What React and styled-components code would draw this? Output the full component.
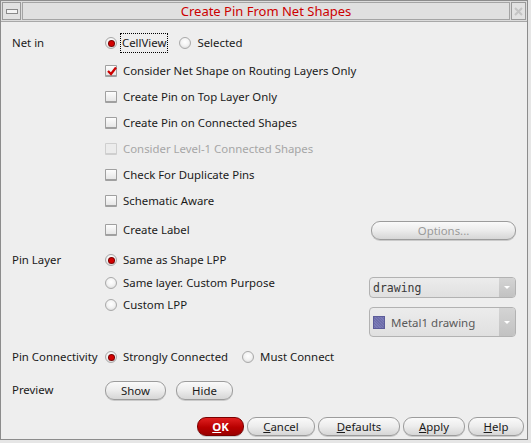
import React from "react";
import styled, { createGlobalStyle } from "styled-components";

const Global = createGlobalStyle`
  html, body {
    margin: 0;
    padding: 0;
    background: #e6e6e6;
  }
  body {
    font-family: "Noto Sans", "DejaVu Sans", sans-serif;
    font-size: 11.4px;
    color: #1a1a1a;
  }
`;

const Window = styled.div`
  width: 528px;
  height: 440px;
  box-sizing: border-box;
  border: 1px solid #8c8c8c;
  background: #eeeeee;
  display: flex;
  flex-direction: column;
`;

const TitleBar = styled.div`
  height: 20px;
  display: flex;
  align-items: stretch;
  background: #dcdcdc;
  border-bottom: 1px solid #a8a8a8;
`;

const TitleBox = styled.div`
  width: ${(p) => p.w}px;
  margin: 1px;
  box-sizing: border-box;
  border: 1px solid #9a9a9a;
  background: #e2e2e2;
  display: flex;
  align-items: center;
  justify-content: center;
`;

const Title = styled.div`
  flex: 1;
  margin: 1px 0;
  border: 1px solid #a4a4a4;
  background: #e0e0e0;
  color: #cc0000;
  font-size: 13px;
  display: flex;
  align-items: center;
  justify-content: center;
`;

const MinBar = styled.div`
  width: 10px;
  height: 3px;
  border: 1px solid #8a8a8a;
  background: #f4f4f4;
`;

const Body = styled.div`
  flex: 1;
  padding: 8px 11px 0 11px;
  display: flex;
  flex-direction: column;
`;

const Row = styled.div`
  display: flex;
  align-items: ${(p) => (p.top ? "flex-start" : "center")};
  height: ${(p) => p.h || 26}px;
  margin-top: ${(p) => p.mt || 0}px;
`;

const Label = styled.div`
  width: 93px;
  flex: none;
  line-height: 18px;
`;

const Controls = styled.div`
  flex: 1;
  display: flex;
  align-items: center;
  gap: ${(p) => p.gap || 12}px;
`;

const Right = styled.div`
  width: 147px;
  flex: none;
  display: flex;
  justify-content: flex-end;
  margin-top: ${(p) => p.mt || 0}px;
`;

const Option = styled.div`
  display: flex;
  align-items: center;
  gap: 6px;
  line-height: 18px;
  color: ${(p) => (p.disabled ? "#a6a6a6" : "#1a1a1a")};
`;

const Focus = styled.span`
  outline: 1px dotted #000;
  outline-offset: 0;
  padding: 0 1px;
  margin-left: -2px;
`;

const RadioDot = styled.span`
  width: 12px;
  height: 12px;
  border-radius: 50%;
  box-sizing: border-box;
  border: 1px solid #a9a9a9;
  background: radial-gradient(circle at 50% 40%, #ffffff 0%, #f2f2f2 50%, #cfcfcf 100%);
  display: flex;
  align-items: center;
  justify-content: center;
  flex: none;

  &::after {
    content: "";
    display: ${(p) => (p.on ? "block" : "none")};
    width: 5px;
    height: 5px;
    border-radius: 50%;
    background: #d40000;
    box-shadow: 0 0 0 1px #7a0000;
  }
`;

const Box = styled.span`
  width: 12px;
  height: 12px;
  box-sizing: border-box;
  border: 1px solid ${(p) => (p.disabled ? "#cfcfcf" : "#a0a0a0")};
  border-bottom-width: 2px;
  background: ${(p) => (p.disabled ? "#ececec" : "linear-gradient(#fdfdfd, #e6e6e6)")};
  border-radius: 1px;
  flex: none;
  position: relative;

  svg {
    position: absolute;
    left: 0;
    top: -1px;
  }
`;

const Button = styled.button`
  font-family: inherit;
  font-size: 11.4px;
  height: ${(p) => p.h || 19}px;
  width: ${(p) => p.w}px;
  padding: 0;
  border-radius: 9px;
  border: 1px solid ${(p) => (p.primary ? "#7a0000" : "#9c9c9c")};
  background: ${(p) =>
    p.primary
      ? "linear-gradient(#e02020, #b80000 55%, #9a0000)"
      : "linear-gradient(#fafafa, #ececec 50%, #d6d6d6)"};
  color: ${(p) => (p.primary ? "#ffffff" : p.disabled ? "#9a9a9a" : "#1a1a1a")};
  font-weight: ${(p) => (p.primary ? "bold" : "normal")};
  box-shadow: 0 1px 0 rgba(0, 0, 0, 0.15);

  u {
    text-decoration: underline;
  }
`;

const Combo = styled.div`
  width: 147px;
  height: ${(p) => p.h}px;
  box-sizing: border-box;
  border: 1px solid #b2b2b2;
  border-radius: 4px;
  background: linear-gradient(#ececec, #e0e0e0);
  display: flex;
  align-items: stretch;
  overflow: hidden;
`;

const ComboText = styled.div`
  flex: 1;
  display: flex;
  align-items: center;
  gap: 6px;
  padding-left: 3px;
  color: ${(p) => (p.mono ? "#3a3a3a" : "#5a5a5a")};
  font-family: ${(p) => (p.mono ? '"DejaVu Sans Mono", monospace' : "inherit")};
  font-size: 11.5px;
`;

const ComboArrow = styled.div`
  width: 16px;
  background: linear-gradient(#d4d4d4, #c2c2c2);
  display: flex;
  align-items: center;
  justify-content: center;

  &::after {
    content: "";
    border-left: 3px solid transparent;
    border-right: 3px solid transparent;
    border-top: 3px solid #ffffff;
  }
`;

const LayerSwatch = styled.span`
  width: 12px;
  height: 13px;
  box-sizing: border-box;
  border: 1px solid #5c5c9a;
  background: repeating-linear-gradient(45deg, #7b7bb8 0 1px, #6e6eaa 1px 2px);
`;

const Footer = styled.div`
  display: flex;
  justify-content: flex-end;
  align-items: center;
  gap: 3px;
  height: 26px;
  margin-top: 10px;
  margin-right: -8px;
`;

const Radio = ({ on, children, focus }) => (
  <Option>
    <RadioDot on={on} />
    {focus ? <Focus>{children}</Focus> : <span>{children}</span>}
  </Option>
);

const Check = ({ on, disabled, children }) => (
  <Option disabled={disabled}>
    <Box disabled={disabled}>
      {on && (
        <svg width="12" height="12" viewBox="0 0 12 12">
          <path d="M2 6 L5 9 L10 2.5" stroke="#cc0000" strokeWidth="2.2" fill="none" />
        </svg>
      )}
    </Box>
    <span>{children}</span>
  </Option>
);

const checks = [
  { text: "Consider Net Shape on Routing Layers Only", on: true },
  { text: "Create Pin on Top Layer Only" },
  { text: "Create Pin on Connected Shapes" },
  { text: "Consider Level-1 Connected Shapes", disabled: true },
  { text: "Check For Duplicate Pins" },
  { text: "Schematic Aware" },
];

export default function App() {
  return (
    <>
      <Global />
      <Window>
        <TitleBar>
          <TitleBox w={19}>
            <MinBar />
          </TitleBox>
          <Title>Create Pin From Net Shapes</Title>
          <TitleBox w={15}>
            <svg width="9" height="9" viewBox="0 0 9 9">
              <path d="M1 1 L8 8 M8 1 L1 8" stroke="#c4c4c4" strokeWidth="2" />
            </svg>
          </TitleBox>
        </TitleBar>
        <Body>
          <Row>
            <Label>Net in</Label>
            <Controls>
              <Radio on focus>CellView</Radio>
              <Radio>Selected</Radio>
            </Controls>
          </Row>
          {checks.map((c, i) => (
            <Row key={c.text} mt={i === 0 ? 2 : 0}>
              <Label />
              <Controls>
                <Check on={c.on} disabled={c.disabled}>
                  {c.text}
                </Check>
              </Controls>
            </Row>
          ))}
          <Row mt={3}>
            <Label />
            <Controls>
              <Check>Create Label</Check>
            </Controls>
            <Right>
              <Button w={145} h={19} disabled>
                Options...
              </Button>
            </Right>
          </Row>
          <Row mt={4}>
            <Label>Pin Layer</Label>
            <Controls>
              <Radio on>Same as Shape LPP</Radio>
            </Controls>
          </Row>
          <Row h={22} mt={1} top>
            <Label />
            <Controls>
              <Radio>Same layer. Custom Purpose</Radio>
            </Controls>
            <Right mt={3}>
              <Combo h={21}>
                <ComboText mono>drawing</ComboText>
                <ComboArrow />
              </Combo>
            </Right>
          </Row>
          <Row h={42} top>
            <Label />
            <Controls>
              <Radio>Custom LPP</Radio>
            </Controls>
            <Right mt={11}>
              <Combo h={30}>
                <ComboText>
                  <LayerSwatch />
                  Metal1 drawing
                </ComboText>
                <ComboArrow />
              </Combo>
            </Right>
          </Row>
          <Row mt={6}>
            <Label>Pin Connectivity</Label>
            <Controls gap={14}>
              <Radio on>Strongly Connected</Radio>
              <Radio>Must Connect</Radio>
            </Controls>
          </Row>
          <Row mt={7}>
            <Label>Preview</Label>
            <Controls gap={10}>
              <Button w={61}>Show</Button>
              <Button w={57}>Hide</Button>
            </Controls>
          </Row>
          <Footer>
            <Button primary w={47}>
              <u>O</u>K
            </Button>
            <Button w={68}>
              <u>C</u>ancel
            </Button>
            <Button w={82}>
              <u>D</u>efaults
            </Button>
            <Button w={62}>
              <u>A</u>pply
            </Button>
            <Button w={56}>
              <u>H</u>elp
            </Button>
          </Footer>
        </Body>
      </Window>
    </>
  );
}
